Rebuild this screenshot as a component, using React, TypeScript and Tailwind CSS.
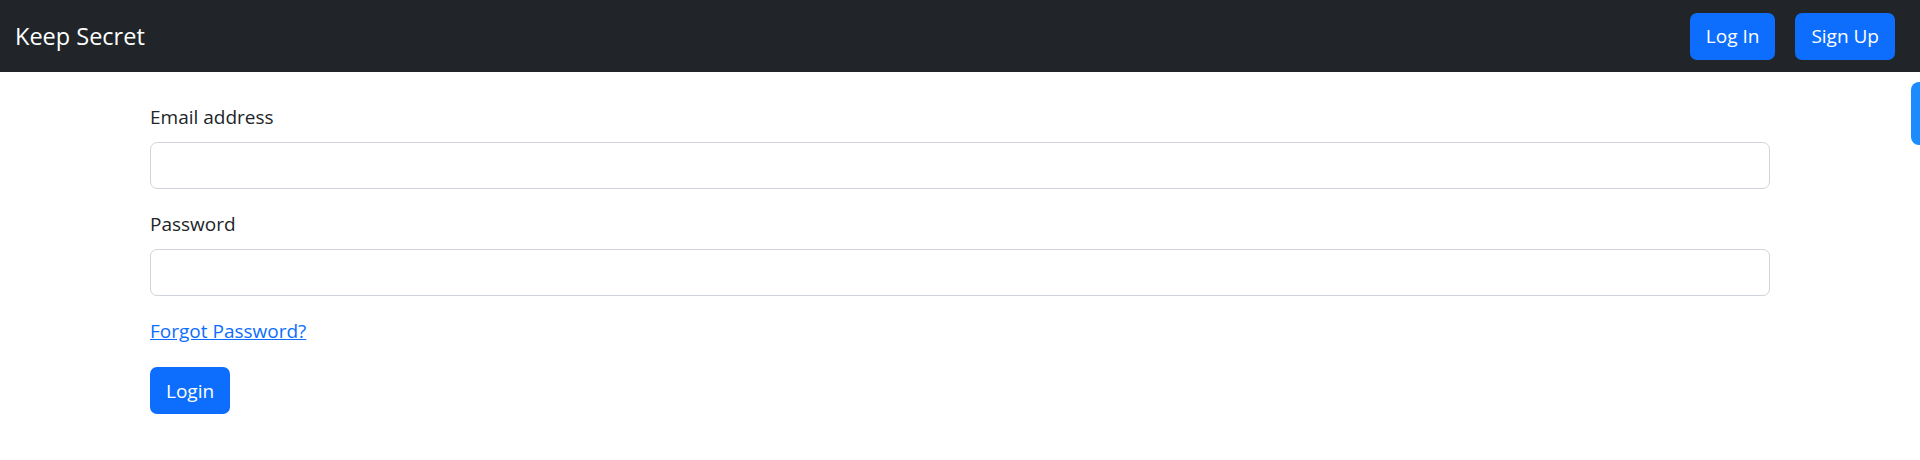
import { useState } from "react"

const font = { fontFamily: '"Open Sans", "Noto Sans", sans-serif' }

const Navbar = () => {
    return (
        <nav className="flex items-center justify-between h-[72px] bg-[#212529] pl-[15px] pr-[25px]">
            <a href="#" className="text-[23.5px] text-white leading-[37px] pt-[1px]">Keep Secret</a>
            <div className="flex gap-[20px]">
                <button className="h-[47px] px-[16px] rounded-[7px] bg-[#0d6efd] text-white text-[19px]">Log In</button>
                <button className="h-[47px] px-[16px] rounded-[7px] bg-[#0d6efd] text-white text-[19px]">Sign Up</button>
            </div>
        </nav>
    )
}

export default function App() {
    const [email, setEmail] = useState("")
    const [password, setPassword] = useState("")

    return (
        <div className="relative min-h-[460px] bg-white text-[#212529]" style={font}>
            <Navbar />
            <form className="w-[1620px] mx-auto pt-[30px] text-[19px] leading-[30px]" onSubmit={(e) => e.preventDefault()}>
                <div className="mb-[20px]">
                    <label htmlFor="email" className="block mb-[10px]">Email address</label>
                    <input
                        id="email"
                        type="email"
                        value={email}
                        onChange={(e) => setEmail(e.target.value)}
                        className="block w-full h-[47px] px-[15px] border border-[#ced4da] rounded-[7px] outline-none"
                    />
                </div>
                <div className="mb-[20px]">
                    <label htmlFor="password" className="block mb-[10px]">Password</label>
                    <input
                        id="password"
                        type="password"
                        value={password}
                        onChange={(e) => setPassword(e.target.value)}
                        className="block w-full h-[47px] px-[15px] border border-[#ced4da] rounded-[7px] outline-none"
                    />
                </div>
                <div className="mb-[21px]">
                    <a href="#" className="text-[#0d6efd] underline">Forgot Password?</a>
                </div>
                <button type="submit" className="h-[47px] px-[16px] rounded-[7px] bg-[#0d6efd] text-white">Login</button>
            </form>
            {/* extension tab on the right edge */}
            <div className="absolute right-0 top-[82px] w-[9px] h-[63px] rounded-l-[8px] bg-[#1a8cff]"></div>
        </div>
    )
}
